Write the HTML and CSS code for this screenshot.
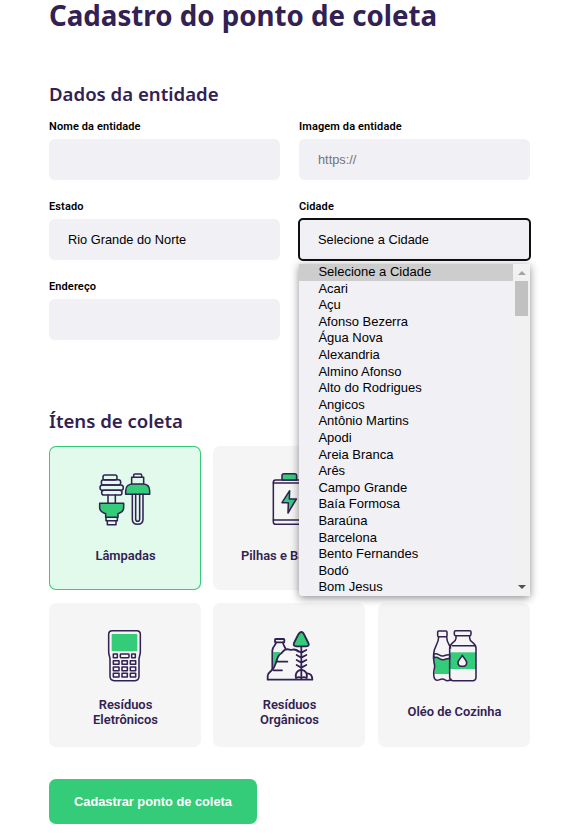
FILE: index.html
```html
<!DOCTYPE html>
<html lang="pt-BR">
<head>
<meta charset="utf-8">
<title>Cadastro do ponto de coleta</title>
<link rel="stylesheet" href="styles.css">
</head>
<body>
<form class="page">
  <h1>Cadastro do ponto de coleta</h1>
  <section>
    <h2>Dados da entidade</h2>
    <div class="fields">
      <div class="field"><span class="label">Nome da entidade</span><div class="control"></div></div>
      <div class="field"><span class="label">Imagem da entidade</span><div class="control placeholder">https://</div></div>
      <div class="field"><span class="label">Estado</span><div class="control">Rio Grande do Norte</div></div>
      <div class="field">
        <span class="label">Cidade</span>
        <div class="control focused">Selecione a Cidade</div>
        <div class="dropdown">
          <ul>
            <li class="selected">Selecione a Cidade</li>
            <li>Acari</li><li>Açu</li><li>Afonso Bezerra</li><li>Água Nova</li>
            <li>Alexandria</li><li>Almino Afonso</li><li>Alto do Rodrigues</li><li>Angicos</li>
            <li>Antônio Martins</li><li>Apodi</li><li>Areia Branca</li><li>Arês</li>
            <li>Campo Grande</li><li>Baía Formosa</li><li>Baraúna</li><li>Barcelona</li>
            <li>Bento Fernandes</li><li>Bodó</li><li>Bom Jesus</li>
          </ul>
          <div class="scrollbar"><i class="up"></i><i class="thumb"></i><i class="down"></i></div>
        </div>
      </div>
      <div class="field"><span class="label">Endereço</span><div class="control"></div></div>
    </div>
  </section>
  <section class="items">
    <h2>Ítens de coleta</h2>
    <div class="cards">
      <div class="card active">
        <svg class="icon" viewBox="0 0 210 210">
          <rect x="39" y="30" width="42" height="15" rx="6"/><rect x="34" y="44" width="58" height="16" rx="7"/><rect x="30" y="60" width="70" height="16" rx="8"/><rect x="35" y="76" width="61" height="14" rx="7"/>
          <path d="M54 90v25M76 90v25M48 155v12h34v-12M52 167v12h26v-12"/>
          <path class="fill" d="M29 115h72v13c0 9-7 15-17 18v11H47v-11c-10-3-18-9-18-18z"/>
          <path d="M131 37v-6q0-4 4-4h16q4 0 4 4v6M125 57V37h36v20"/>
          <path class="fill" d="M107 88V77c0-13 10-20 22-20h28c13 0 22 7 22 20v11z"/>
          <path d="M127 88v75q0 15 16 15t16-15V88M137 88v74q0 7 6 7t6-7V88"/>
        </svg>
        <span class="caption">Lâmpadas</span>
      </div>
      <div class="card">
        <svg class="icon" viewBox="-1 0 210 210">
          <rect x="57" y="45" width="96" height="133" rx="7"/>
          <path class="fill" d="M83 45V32q0-6 6-6h32q6 0 6 6v13z"/>
          <path d="M57 54h96M57 165h96"/>
          <path class="fill" d="M106 77L83 113h19l-1 31 25-42h-21z"/>
        </svg>
        <span class="caption">Pilhas e Baterias</span>
      </div>
      <div class="card"></div>
      <div class="card">
        <svg class="icon" viewBox="0 5 210 210">
          <path d="M67 31h73q11 0 11 11v52c0 11-4 13-4 24v50q0 13-12 13H73q-13 0-13-13v-50c0-11-4-13-4-24V42q0-11 11-11z"/>
          <rect class="plain" x="65" y="41" width="77" height="52" rx="3"/>
          <g><rect x="70" y="101" width="12" height="11"/><rect x="91" y="101" width="26" height="11" rx="2"/><rect x="125" y="101" width="11" height="11"/><rect x="70" y="121" width="17" height="11"/><rect x="96" y="121" width="16" height="11"/><rect x="121" y="121" width="16" height="11"/><rect x="70" y="140" width="17" height="11"/><rect x="96" y="140" width="16" height="11"/><rect x="121" y="140" width="16" height="11"/><rect x="70" y="159" width="17" height="11"/><rect x="96" y="159" width="16" height="11"/><rect x="121" y="159" width="16" height="11"/></g>
        </svg>
        <span class="caption">Resíduos<br>Eletrônicos</span>
      </div>
      <div class="card">
        <svg class="icon bold" viewBox="-3 5 210 210">
          <path class="plain" d="M55 95h20l-9 29-11 15z"/>
          <path d="M63 66c0 10-11 11-11 25v56M84 66c0 9 5 12 8 20"/>
          <rect x="60" y="56" width="28" height="10" rx="2"/>
          <path d="M38 178v-12c0-7 4-9 10-14 7-7 12-14 15-25 3-12 5-22 14-27 6-4 7-9 14-12 8-4 15 2 22 0 8-2 12 1 17 6M38 178h134c0-11-4-18-14-19M68 124h29M56 150h25M139 79v81M139 97l-14-8M139 97l15-8M139 112l-14-8M139 112l15-8M139 127l-14-8M139 127l15-8M139 142l-14-8M139 142l15-8"/>
          <path class="light" d="M139 148c-12 3-19 12-16 25 8-4 13-3 16 1 3-4 8-5 16-1 3-13-4-22-16-25zM139 148v25"/>
          <path class="fill" d="M139 35c-6 0-7 4-10 9l-12 24c-3 7 1 10 7 10h30c7 0 9-4 6-10l-12-24c-2-5-4-9-9-9z"/>
        </svg>
        <span class="caption">Resíduos<br>Orgânicos</span>
      </div>
      <div class="card">
        <svg class="icon" viewBox="-3 5 210 210">
          <path class="plain" d="M42 101c12-4 16 9 27 7 8-2 13-7 20-4v57H41c5-9 5-15 1-24-3-11-3-20 0-36z"/>
          <rect class="plain" x="89" y="96" width="79" height="50"/>
          <path class="light" d="M41 101c14-5 17 8 28 6 8-1 13-6 20-3v11c-6-3-11 2-19 3-11 2-14-11-28-6z"/>
          <path d="M56 50c0 21-15 29-15 51M80 50c0 15 7 22 12 33M41 101c-3 20 3 25 3 36 0 7-3 12-3 22 0 13 1 21 10 21 8 0 8-4 16-4s8 5 15 5c6 0 10-1 11-4"/>
          <rect x="53" y="32" width="28" height="17" rx="3"/>
          <rect x="103" y="31" width="50" height="15" rx="4"/>
          <path d="M108 46v8c0 13-19 12-19 29v87q0 11 11 11h58q10 0 10-11V83c0-17-19-16-19-29v-8M97 76h66"/>
          <path class="light" d="M127 105c-4 8-13 14-13 22 0 7 6 11 13 11s13-4 13-11c0-8-9-14-13-22z"/>
        </svg>
        <span class="caption single">Oléo de Cozinha</span>
      </div>
    </div>
  </section>
  <button type="button">Cadastrar ponto de coleta</button>
</form>
</body>
</html>
```

FILE: styles.css
```css
* { box-sizing: border-box; }
html { overflow: hidden; }
body { margin: 0; background: #fff; color: #000; font-family: Roboto, sans-serif; }
.page { width: 481px; margin: 0 0 0 49px; }
h1, h2 { margin: 0; color: #322153; font-family: "Noto Sans", sans-serif; white-space: nowrap; }
h1 { height: 82px; font-size: 27.7px; line-height: 30px; font-weight: 700; }
h2 { height: 24px; font-size: 18.6px; line-height: 24px; font-weight: 600; }
.fields { display: grid; grid-template-columns: 231px 231px; column-gap: 19px; row-gap: 20px; margin-top: 14px; }
.field { position: relative; height: 60px; }
.label { display: block; height: 19px; font-size: 11px; line-height: 13px; font-weight: 600; letter-spacing: .11px; }
.control { height: 41px; padding: 0 19px; border-radius: 6px; background: #f0f0f5; font: 12.8px/41px "Liberation Sans", sans-serif; }
.placeholder { color: #757575; }
.focused { outline: 2px solid #101010; outline-offset: -1px; border-radius: 4px; }
.dropdown { position: absolute; z-index: 2; top: 64px; left: 0; width: 231px; height: 332px; display: flex; background: #f0f0f5; border-radius: 0 0 3px 3px; box-shadow: 0 2px 8px rgba(0,0,0,.45); }
ul { flex: 1; margin: 0; padding: 0; list-style: none; font: 13px/16.6px "Liberation Sans", sans-serif; }
li { height: 16.6px; padding-left: 19.4px; white-space: nowrap; }
.selected { background: #cdcdcd; }
.scrollbar { display: flex; flex-direction: column; align-items: center; width: 17px; background: #f1f1f1; }
.up, .down { border: 4px solid transparent; }
.up { margin-top: 3px; border-bottom-color: #a3a3a3; }
.thumb { width: 13px; height: 35px; margin-top: 6px; background: #c1c1c1; }
.down { margin-top: auto; margin-bottom: 3px; border-top-color: #505050; }
.items { margin-top: 69px; }
.cards { display: grid; grid-template-columns: 152px 153px 152px; column-gap: 12px; row-gap: 13px; margin-top: 13px; }
.card { display: flex; flex-direction: column; align-items: center; width: 152px; height: 144px; padding-top: 19px; border-radius: 7px; background: #f5f5f5; }
.active { background: #e1faec; box-shadow: inset 0 0 0 1px #34cb79; }
.icon { width: 70px; height: 70px; fill: none; stroke: #322153; stroke-width: 4.6; stroke-linejoin: round; stroke-linecap: round; }
.bold { stroke-width: 5.4; }
.icon .fill { fill: #34cb79; }
.icon .plain { fill: #34cb79; stroke: none; }
.icon .light { fill: #f5f5f5; }
.caption { display: flex; align-items: center; height: 40px; padding-left: 1px; color: #322153; font-size: 12.9px; line-height: 15px; font-weight: 600; text-align: center; }
.single { height: 39px; }
button { display: block; width: 208px; height: 45px; margin-top: 32px; padding: 0; border: 0; border-radius: 7px; background: #34cb79; color: #fff; font: 700 12.8px "Liberation Sans", sans-serif; white-space: nowrap; }
```
